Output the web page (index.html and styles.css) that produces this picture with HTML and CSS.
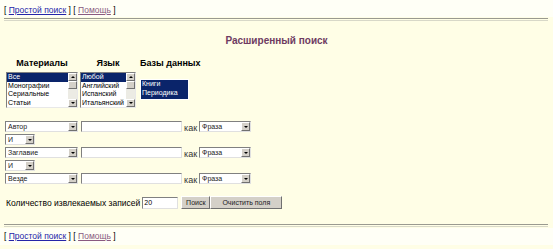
FILE: index.html
```html
<!DOCTYPE html>
<html lang="ru">
<head>
    <meta charset="UTF-8">
    <title>Расширенный поиск</title>
    <link rel="stylesheet" href="styles.css">
</head>
<body>
    <div class="nav-bar top">
        [ <a href="#" class="link">Простой поиск</a> ] [ <a href="#" class="link visited">Помощь</a> ]
    </div>
    <div class="rule"></div>

    <h1 class="title">Расширенный поиск</h1>

    <div class="filters">
        <div class="filter">
            <div class="filter-label">Материалы</div>
            <div class="listbox w-mat">
                <div class="list-items">
                    <div class="item selected">Все</div>
                    <div class="item">Монографии</div>
                    <div class="item">Сериальные</div>
                    <div class="item">Статьи</div>
                </div>
                <div class="scrollbar">
                    <span class="sb-btn up"></span>
                    <span class="sb-thumb"></span>
                    <span class="sb-track"></span>
                    <span class="sb-btn down"></span>
                </div>
            </div>
        </div>
        <div class="filter">
            <div class="filter-label">Язык</div>
            <div class="listbox w-lang">
                <div class="list-items">
                    <div class="item selected">Любой</div>
                    <div class="item">Английский</div>
                    <div class="item">Испанский</div>
                    <div class="item">Итальянский</div>
                </div>
                <div class="scrollbar">
                    <span class="sb-btn up"></span>
                    <span class="sb-thumb"></span>
                    <span class="sb-track"></span>
                    <span class="sb-btn down"></span>
                </div>
            </div>
        </div>
        <div class="filter filter-db">
            <div class="filter-label">Базы данных</div>
            <div class="listbox w-db">
                <div class="list-items">
                    <div class="item selected">Книги</div>
                    <div class="item selected">Периодика</div>
                </div>
            </div>
        </div>
    </div>

    <div class="query">
        <div class="q-row">
            <div class="combo w-field"><span class="combo-text">Автор</span><span class="combo-btn"></span></div>
            <input type="text" class="q-input">
            <span class="kak">как</span>
            <div class="combo w-mode"><span class="combo-text">Фраза</span><span class="combo-btn"></span></div>
        </div>
        <div class="q-row">
            <div class="combo w-op"><span class="combo-text">И</span><span class="combo-btn"></span></div>
        </div>
        <div class="q-row">
            <div class="combo w-field"><span class="combo-text">Заглавие</span><span class="combo-btn"></span></div>
            <input type="text" class="q-input">
            <span class="kak">как</span>
            <div class="combo w-mode"><span class="combo-text">Фраза</span><span class="combo-btn"></span></div>
        </div>
        <div class="q-row">
            <div class="combo w-op"><span class="combo-text">И</span><span class="combo-btn"></span></div>
        </div>
        <div class="q-row">
            <div class="combo w-field"><span class="combo-text">Везде</span><span class="combo-btn"></span></div>
            <input type="text" class="q-input">
            <span class="kak">как</span>
            <div class="combo w-mode"><span class="combo-text">Фраза</span><span class="combo-btn"></span></div>
        </div>
    </div>

    <div class="actions">
        <span class="count-label">Количество извлекаемых записей</span>
        <input type="text" class="count-input" value="20">
        <button class="btn btn-search">Поиск</button>
        <button class="btn btn-clear">Очистить поля</button>
    </div>

    <div class="rule bottom"></div>
    <div class="nav-bar">
        [ <a href="#" class="link">Простой поиск</a> ] [ <a href="#" class="link visited">Помощь</a> ]
    </div>
</body>
</html>
```

FILE: styles.css
```css
body {
    margin: 0;
    background-color: #fffee6;
    font-family: "Liberation Sans", Arial, sans-serif;
    color: #000;
}

/* Верхняя и нижняя навигация */
.nav-bar {
    height: 17px;
    line-height: 17px;
    padding-left: 4px;
    font-size: 8.5px;
    background-color: #fffff6;
}
.nav-bar.top {
    height: 14px;
    padding-top: 3px;
    line-height: 14px;
}

.link {
    color: #2525a8;
}
.link.visited {
    color: #8a5a80;
}

.rule {
    margin: 1px 5px 0 4px;
    height: 1px;
    border-top: 1px solid #9a9a90;
    border-bottom: 1px solid #d8d8c8;
}
.rule.bottom {
    margin-top: 15px;
    margin-bottom: 1px;
}

.title {
    margin: 14px 0 0;
    text-align: center;
    font-size: 10px;
    font-weight: bold;
    color: #6e3b62;
    height: 14px;
}

/* Списки материалов, языков, баз */
.filters {
    display: flex;
    align-items: flex-start;
    padding-left: 6px;
    margin-top: 8px;
    gap: 2px;
}

.filter {
    display: flex;
    flex-direction: column;
    align-items: center;
}
.filter-db {
    align-items: flex-start;
    margin-left: 2px;
}

.filter-label {
    font-size: 9px;
    font-weight: bold;
    height: 15px;
    line-height: 12px;
}

.listbox {
    display: flex;
    background: #fff;
    border-top: 1px solid #808080;
    border-left: 1px solid #808080;
    border-right: 1px solid #e8e8e8;
    border-bottom: 1px solid #e8e8e8;
    height: 36px;
    box-sizing: border-box;
}
.w-mat { width: 72px; }
.w-lang { width: 56px; }
.w-db {
    width: 49px;
    height: 21px;
    margin-top: 7px;
    border: 1px solid #fff;
    background: #0a246a;
}

.list-items {
    flex: 1;
    overflow: hidden;
}

.item {
    font-size: 7px;
    height: 8.5px;
    line-height: 8.5px;
    padding-left: 1px;
    white-space: nowrap;
}
.item.selected {
    background-color: #0a246a;
    color: #fff;
}

.scrollbar {
    width: 9px;
    display: flex;
    flex-direction: column;
    background: #ecebe4;
}
.sb-btn,
.sb-thumb {
    display: block;
    height: 8px;
    background: #d4d0c8;
    border: 1px solid #fff;
    border-right-color: #707070;
    border-bottom-color: #707070;
    box-sizing: border-box;
    position: relative;
}
.sb-track {
    flex: 1;
}
.sb-btn::after {
    content: "";
    position: absolute;
    left: 2px;
    top: 2px;
    border-left: 2px solid transparent;
    border-right: 2px solid transparent;
}
.sb-btn.up::after {
    border-bottom: 2px solid #000;
}
.sb-btn.down::after {
    border-top: 2px solid #000;
}

/* Строки запроса */
.query {
    margin-top: 12px;
    padding-left: 5px;
}

.q-row {
    display: flex;
    align-items: center;
    height: 13px;
}

.combo {
    display: flex;
    height: 11px;
    background: #fff;
    border-top: 1px solid #808080;
    border-left: 1px solid #808080;
    border-right: 1px solid #e0e0e0;
    border-bottom: 1px solid #e0e0e0;
    box-sizing: border-box;
}
.combo-text {
    flex: 1;
    font-size: 7px;
    line-height: 9px;
    padding-left: 2px;
    color: #222;
}
.combo-btn {
    width: 9px;
    background: #d4d0c8;
    border: 1px solid #fff;
    border-right-color: #707070;
    border-bottom-color: #707070;
    box-sizing: border-box;
    position: relative;
}
.combo-btn::after {
    content: "";
    position: absolute;
    left: 2px;
    top: 3px;
    border-left: 2px solid transparent;
    border-right: 2px solid transparent;
    border-top: 2px solid #000;
}

.w-field { width: 73px; }
.w-op { width: 30px; }
.w-mode { width: 52px; }

.q-input {
    width: 101px;
    height: 11px;
    margin: 0 0 0 3px;
    padding: 0;
    background: #fff;
    border-top: 1px solid #808080;
    border-left: 1px solid #808080;
    border-right: 1px solid #e0e0e0;
    border-bottom: 1px solid #e0e0e0;
    box-sizing: border-box;
}

.kak {
    font-size: 9px;
    color: #333;
    margin: 2px 2px 0 2px;
}

/* Нижняя панель с кнопками */
.actions {
    display: flex;
    align-items: center;
    margin-top: 11px;
    padding-left: 6px;
    height: 13px;
}
.count-label {
    font-size: 8.5px;
    margin-right: 2px;
}
.count-input {
    width: 36px;
    height: 12px;
    padding: 0 1px;
    font-size: 7px;
    font-family: inherit;
    background: #fff;
    border-top: 1px solid #808080;
    border-left: 1px solid #808080;
    border-right: 1px solid #e0e0e0;
    border-bottom: 1px solid #e0e0e0;
    box-sizing: border-box;
}
.btn {
    height: 13px;
    padding: 0;
    font-size: 7px;
    font-family: inherit;
    color: #222;
    background: #d4d0c8;
    border: 1px solid #fff;
    border-right-color: #707070;
    border-bottom-color: #707070;
    box-sizing: border-box;
}
.btn-search {
    width: 29px;
    margin-left: 3px;
}
.btn-clear {
    width: 72px;
}
```
